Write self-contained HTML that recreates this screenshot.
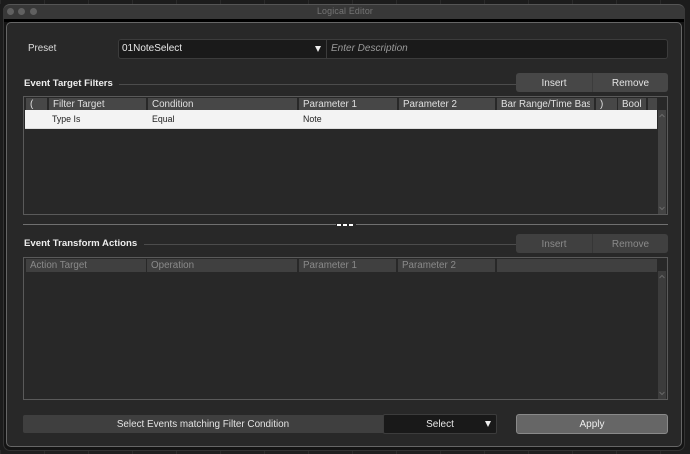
<!DOCTYPE html>
<html>
<head>
<meta charset="utf-8">
<style>
html,body{margin:0;padding:0;background:#1d1d1d;}
#p{position:relative;width:690px;height:454px;overflow:hidden;background:#1c1c1c;font-family:"Liberation Sans",sans-serif;font-size:10px;color:#e4e4e4;filter:blur(.25px);}
#p div{position:absolute;box-sizing:border-box;white-space:nowrap;}
.h{background:#474747;height:13px;line-height:14px;padding-left:4px;overflow:hidden;color:#e0e0e0;font-size:9.8px;}
.d{color:#8a8a8a;background:#404040;}
.tb{background:#282828;border:1px solid #5a5a5a;}
.t{font-weight:bold;font-size:9.6px;color:#eee;line-height:12px;}
.ln{height:1px;background:#4c4c4c;}
.b{background:#474747;border-radius:3px;}
.c{text-align:center;line-height:21px;font-size:10px;}
.sb{background:#434343;width:8px;}
</style>
</head>
<body>
<div id="p">
<div style="left:0;top:0;width:690px;height:4px;background:repeating-linear-gradient(90deg,#2a2a2a 0 1px,#1c1c1c 1px 44px);"></div>
<div style="left:0;top:450px;width:690px;height:4px;background:repeating-linear-gradient(90deg,#2c2c2c 0 1px,#1f1f1f 1px 44px);"></div>

<div style="left:3px;top:4px;width:682px;height:447px;background:#141414;border-radius:7px;border:1px solid #333;"></div>
<div style="left:3px;top:4px;width:682px;height:15px;background:#383838;border-radius:7px 7px 0 0;border-top:1px solid #555;"></div>
<div style="left:4px;top:19px;width:680px;height:3px;background:#000;"></div>
<div style="left:7px;top:8px;width:7px;height:7px;border-radius:50%;background:#606060;"></div>
<div style="left:18px;top:8px;width:7px;height:7px;border-radius:50%;background:#606060;"></div>
<div style="left:30px;top:8px;width:7px;height:7px;border-radius:50%;background:#606060;"></div>
<div style="left:0;top:5px;width:690px;text-align:center;font-size:8.8px;line-height:13px;color:#757575;letter-spacing:.2px;">Logical Editor</div>

<div style="left:6px;top:22px;width:676px;height:425px;background:#282828;border:1px solid #666;border-radius:5px;"></div>

<div style="left:28px;top:42px;line-height:14px;font-size:9.8px;color:#ddd;">Preset</div>
<div style="left:118px;top:39px;width:209px;height:20px;background:#1a1a1a;border:1px solid #3c3c3c;border-radius:3px 0 0 3px;"></div>
<div style="left:122px;top:42px;line-height:14px;font-size:10px;color:#e8e8e8;">01NoteSelect</div>
<div style="left:315px;top:46px;width:0;height:0;border-left:3.5px solid transparent;border-right:3.5px solid transparent;border-top:6px solid #eee;"></div>
<div style="left:327px;top:39px;width:341px;height:20px;background:#1a1a1a;border:1px solid #3c3c3c;border-left:none;border-radius:0 3px 3px 0;"></div>
<div style="left:331px;top:42px;line-height:14px;font-size:10px;font-style:italic;color:#9a9a9a;">Enter Description</div>

<div class="t" style="left:24px;top:78px;">Event Target Filters</div>
<div class="ln" style="left:119px;top:84px;width:398px;"></div>
<div class="b" style="left:516px;top:73px;width:152px;height:19px;"></div>
<div style="left:592px;top:73px;width:1px;height:19px;background:#3c3c3c;"></div>
<div class="c" style="left:516px;top:73px;width:76px;">Insert</div>
<div class="c" style="left:593px;top:73px;width:75px;">Remove</div>

<div class="tb" style="left:23px;top:96px;width:645px;height:119px;"></div>
<div class="h" style="left:26px;top:98px;width:21px;">(</div>
<div class="h" style="left:49px;top:98px;width:97px;">Filter Target</div>
<div class="h" style="left:148px;top:98px;width:149px;">Condition</div>
<div class="h" style="left:299px;top:98px;width:98px;">Parameter 1</div>
<div class="h" style="left:399px;top:98px;width:96px;">Parameter 2</div>
<div class="h" style="left:497px;top:98px;width:97px;"><span style="display:block;width:89px;overflow:hidden;">Bar Range/Time Base</span></div>
<div class="h" style="left:596px;top:98px;width:21px;">)</div>
<div class="h" style="left:618px;top:98px;width:28px;"><span style="display:block;width:20px;overflow:hidden;">Bool</span></div>
<div class="h" style="left:648px;top:98px;width:9px;padding:0;"></div>
<div style="left:25px;top:110px;width:632px;height:19px;background:#f3f3f3;border-bottom:1px solid #ddd;"></div>
<div style="left:52px;top:112px;line-height:14px;font-size:8.8px;color:#222;">Type Is</div>
<div style="left:152px;top:112px;line-height:14px;font-size:8.8px;color:#222;">Equal</div>
<div style="left:303px;top:112px;line-height:14px;font-size:8.8px;color:#222;">Note</div>
<div class="sb" style="left:658px;top:110px;height:104px;"></div>
<svg style="position:absolute;left:658px;top:112px;" width="8" height="8"><path d="M1.5 5 L4 2.5 L6.5 5" fill="none" stroke="#6a6a6a" stroke-width="1"/></svg>
<svg style="position:absolute;left:658px;top:204px;" width="8" height="8"><path d="M1.5 3 L4 5.5 L6.5 3" fill="none" stroke="#6a6a6a" stroke-width="1"/></svg>

<div style="left:23px;top:224px;width:313px;height:1px;background:#707070;"></div>
<div style="left:356px;top:224px;width:312px;height:1px;background:#707070;"></div>
<div style="left:337px;top:224px;width:4px;height:1.5px;background:#fff;"></div>
<div style="left:343px;top:224px;width:4px;height:1.5px;background:#fff;"></div>
<div style="left:349px;top:224px;width:4px;height:1.5px;background:#fff;"></div>

<div class="t" style="left:24px;top:238px;">Event Transform Actions</div>
<div class="ln" style="left:144px;top:244px;width:373px;"></div>
<div class="b" style="left:516px;top:234px;width:152px;height:19px;background:#404040;"></div>
<div style="left:592px;top:234px;width:1px;height:19px;background:#363636;"></div>
<div class="c" style="left:516px;top:234px;width:76px;color:#8a8a8a;">Insert</div>
<div class="c" style="left:593px;top:234px;width:75px;color:#8a8a8a;">Remove</div>

<div class="tb" style="left:23px;top:257px;width:645px;height:143px;"></div>
<div class="h d" style="left:26px;top:259px;width:120px;">Action Target</div>
<div class="h d" style="left:147px;top:259px;width:150px;">Operation</div>
<div class="h d" style="left:299px;top:259px;width:97px;">Parameter 1</div>
<div class="h d" style="left:398px;top:259px;width:97px;">Parameter 2</div>
<div class="h d" style="left:497px;top:259px;width:160px;"></div>
<div class="sb" style="left:658px;top:271px;height:128px;background:#3c3c3c;"></div>
<svg style="position:absolute;left:658px;top:273px;" width="8" height="8"><path d="M1.5 5 L4 2.5 L6.5 5" fill="none" stroke="#666" stroke-width="1"/></svg>
<svg style="position:absolute;left:658px;top:389px;" width="8" height="8"><path d="M1.5 3 L4 5.5 L6.5 3" fill="none" stroke="#666" stroke-width="1"/></svg>

<div style="left:23px;top:415px;width:362px;height:18px;background:#3f3f3f;border-radius:2px;"></div>
<div style="left:23px;top:416px;width:360px;text-align:center;line-height:18px;font-size:9.9px;color:#e4e4e4;">Select Events matching Filter Condition</div>
<div style="left:383px;top:414px;width:114px;height:20px;background:#191919;border:1px solid #3c3c3c;border-radius:2px;"></div>
<div style="left:383px;top:415px;width:114px;text-align:center;line-height:20px;font-size:10px;color:#e8e8e8;">Select</div>
<div style="left:485px;top:421px;width:0;height:0;border-left:3.5px solid transparent;border-right:3.5px solid transparent;border-top:6px solid #eee;"></div>
<div style="left:516px;top:414px;width:152px;height:20px;background:#666;border:1px solid #8a8a8a;border-radius:3px;text-align:center;line-height:20px;font-size:10px;color:#eee;">Apply</div>
</div>
</body>
</html>
